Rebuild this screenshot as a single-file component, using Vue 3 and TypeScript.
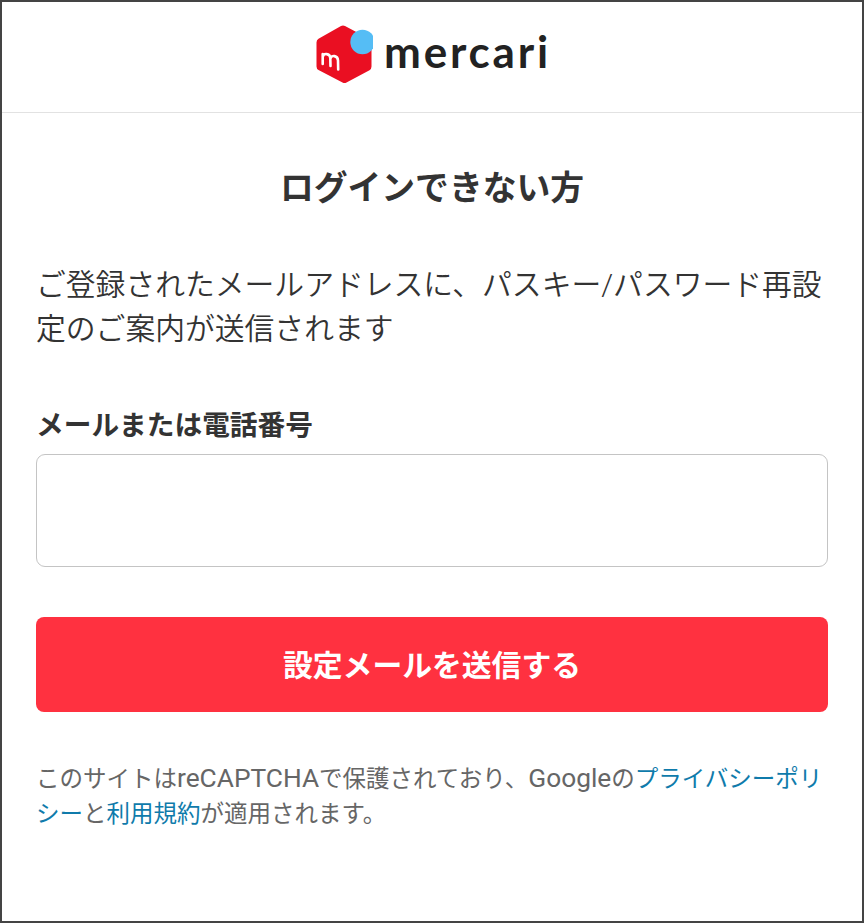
<script setup lang="ts">
const title = 'ログインできない方'
</script>

<template>
  <div class="frame">
    <header class="head">
      <div class="logo">
        <svg class="mark" width="58" height="60" viewBox="0 0 58 60" aria-hidden="true">
          <path d="M26 2 Q28 .8 30 2 L54.500 15 Q56.500 16 56.500 18.500 L56.500 42.500 Q56.500 45 54.500 46.200 L31.500 58.500 Q29.500 59.600 27.500 58.500 L3.500 46 Q1.500 45 1.500 42.500 L1.500 18.500 Q1.500 16 3.500 14.800 Z" fill="#ea0f22" />
          <path d="M7.700 30 L7.700 40 M7.700 33 C8.500 28.500 15 29.500 15.300 34 L15.500 42 M15.500 34.500 C16.300 30.500 22.800 31.500 23 36.500 L23.200 45.500" fill="none" stroke="#fff" stroke-width="2.600" stroke-linecap="round" />
          <circle cx="47.500" cy="18" r="12.200" fill="#55bdf5" />
        </svg>
        <span class="word">mercari</span>
      </div>
    </header>

    <main class="body">
      <h1 class="title">{{ title }}</h1>
      <p class="lead">ご登録されたメールアドレスに、パスキー/パスワード再設定のご案内が送信されます</p>
      <label class="label" for="account">メールまたは電話番号</label>
      <input id="account" class="field" type="text" />
      <button class="submit" type="button">設定メールを送信する</button>
      <p class="note">このサイトは<span class="latin">reCAPTCHA</span>で保護されており、<span class="latin">Google</span>の<a class="link">プライバシーポリシー</a>と<a class="link">利用規約</a>が適用されます。</p>
    </main>
  </div>
</template>

<style>
html, body { margin: 0; background: #fff; }
</style>

<style scoped>
.frame {
  box-sizing: border-box;
  width: 864px;
  height: 923px;
  border: 2px solid #444;
  background: #fff;
  font-family: Roboto, "Noto Sans CJK JP", "Liberation Sans", sans-serif;
  color: #333;
  overflow: hidden;
}
.head {
  box-sizing: border-box;
  height: 111px;
  border-bottom: 1px solid #e2e2e2;
  display: flex;
  justify-content: center;
  padding-top: 22px;
}
.logo {
  display: flex;
  align-items: flex-start;
  gap: 11px;
  margin-left: 2px;
}
.word {
  font-family: "Lato", sans-serif;
  font-weight: 700;
  font-size: 44px;
  line-height: 55px;
  letter-spacing: 2.800px;
  color: #222;
}
.body {
  display: flex;
  flex-direction: column;
  padding: 0 34px;
}
.title {
  margin: 51px 0 0;
  font-size: 33.800px;
  line-height: 50px;
  font-weight: 700;
  text-align: center;
  color: #333;
}
.lead {
  margin: 49px 0 0;
  font-size: 29.800px;
  line-height: 44px;
  font-weight: 350;
}
.label {
  margin-top: 55px;
  font-size: 27.700px;
  line-height: 40px;
  font-weight: 700;
}
.field {
  box-sizing: border-box;
  display: block;
  width: 100%;
  height: 113px;
  margin-top: 8px;
  border: 1.500px solid #c4c4c4;
  border-radius: 9px;
  background: #fff;
  outline: none;
}
.submit {
  display: block;
  width: 100%;
  height: 95px;
  margin-top: 50px;
  border: 0;
  border-radius: 8px;
  background: #ff3140;
  color: #fff;
  font-family: inherit;
  font-size: 29.800px;
  font-weight: 700;
  padding-bottom: 4px;
}
.note {
  margin: 50px 0 0;
  font-size: 23.500px;
  line-height: 35px;
  color: #666;
}
.latin { font-size: 26.300px; line-height: 1; }
.link { color: #0f7bab; }
</style>
